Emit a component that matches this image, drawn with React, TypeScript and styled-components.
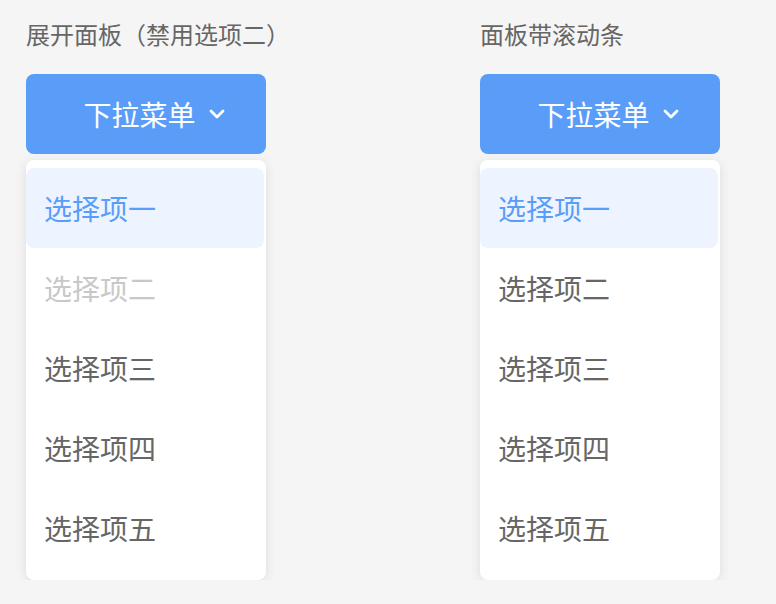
import React from 'react';
import styled, {createGlobalStyle} from "styled-components";

const GlobalStyle = createGlobalStyle`
  body {
    margin: 0;
    background: #f5f5f5;
    font-family: "Noto Sans CJK SC", "Noto Sans", sans-serif;
  }
`

const options = ["选择项一", "选择项二", "选择项三", "选择项四", "选择项五"];

const Chevron = () => (
    <svg width="16" height="10" viewBox="0 0 16 10" fill="none">
        <path d="M2 2 L8 8 L14 2" stroke="#fff" strokeWidth="2.8" strokeLinecap="round" strokeLinejoin="round"/>
    </svg>
);

type DropdownProps = {
    title: string;
    items: string[];
    disabled?: number[];
    scroll?: boolean;
}

const Dropdown = ({title, items, disabled = [], scroll}: DropdownProps) => {
    return (
        <Column>
            <Title>{title}</Title>
            <Trigger>
                <span>下拉菜单</span>
                <Chevron/>
            </Trigger>
            <Panel scroll={scroll}>
                {items.map((item, i) => (
                    <Item key={item} active={i === 0} disabled={disabled.includes(i)}>
                        {item}
                    </Item>
                ))}
            </Panel>
        </Column>
    );
};

export default function App() {
    return (
        <>
            <GlobalStyle/>
            <Page>
                <Dropdown title="展开面板（禁用选项二）" items={options} disabled={[1]}/>
                <Dropdown title="面板带滚动条" items={options} scroll/>
            </Page>
        </>
    );
}

const Page = styled.div`
  display: flex;
  gap: 214px;
  padding: 18px 0 0 26px;
`

const Column = styled.div`
  display: flex;
  flex-direction: column;
  width: 240px;
`

const Title = styled.div`
  font-size: 24px;
  line-height: 32px;
  color: #666;
  white-space: nowrap;
`

const Trigger = styled.button`
  margin-top: 24px;
  height: 80px;
  border: none;
  border-radius: 8px;
  background: #5a9df8;
  color: #fff;
  font-family: inherit;
  font-size: 28px;
  display: flex;
  align-items: center;
  justify-content: center;
  gap: 13px;
  padding: 0 0 0 16px;
  cursor: pointer;
`

const Panel = styled.div<{ scroll?: boolean }>`
  margin-top: 6px;
  background: #fff;
  border-radius: 8px;
  box-shadow: 0 2px 12px rgba(0, 0, 0, 0.1);
  padding: 8px 0 12px;
  max-height: 400px;
  overflow-y: ${p => p.scroll ? "auto" : "hidden"};

  &::-webkit-scrollbar {
    width: 0;
  }
`

const Item = styled.div<{ active?: boolean; disabled?: boolean }>`
  height: 80px;
  margin-right: 2px;
  border-radius: 8px;
  display: flex;
  align-items: center;
  padding-left: 18px;
  font-size: 28px;
  color: ${p => p.disabled ? "#c8c8c8" : p.active ? "#5a9df8" : "#666"};
  background: ${p => p.active ? "#edf4ff" : "transparent"};
`
